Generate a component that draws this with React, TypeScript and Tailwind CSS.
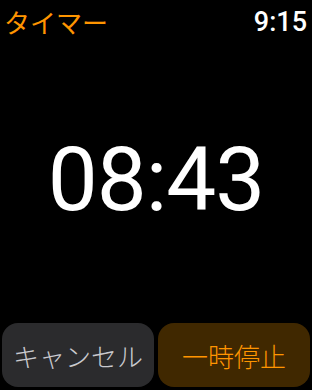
export default function App() {
  return (
    <div
      className="w-[312px] h-[390px] bg-black flex flex-col overflow-hidden"
      style={{ fontFamily: 'Roboto, "Noto Sans CJK JP", sans-serif' }}
    >
      {/* Header */}
      <div className="flex items-center justify-between h-[44px] pl-[4px] pr-[5px]">
        <span className="text-[26px] leading-none text-[#ff9500] font-['Noto_Sans_CJK_JP',sans-serif]">
          タイマー
        </span>
        <span className="text-[27px] leading-none font-medium text-white">9:15</span>
      </div>

      {/* Countdown */}
      <div className="flex-1 flex items-center justify-center">
        <span className="text-[89px] leading-none text-white tracking-[-1px] mb-[8px]">08:43</span>
      </div>

      {/* Buttons */}
      <div className="flex gap-[4px] px-[2px] pb-[3px]">
        <button
          type="button"
          className="flex-1 h-[64px] rounded-[16px] bg-[#2b2b2d] text-[#c9c9ce] text-[26px] font-light font-['Noto_Sans_CJK_JP',sans-serif]"
        >
          キャンセル
        </button>
        <button
          type="button"
          className="flex-1 h-[64px] rounded-[16px] bg-[#402800] text-[#ff9500] text-[26px] font-light font-['Noto_Sans_CJK_JP',sans-serif]"
        >
          一時停止
        </button>
      </div>
    </div>
  )
}
